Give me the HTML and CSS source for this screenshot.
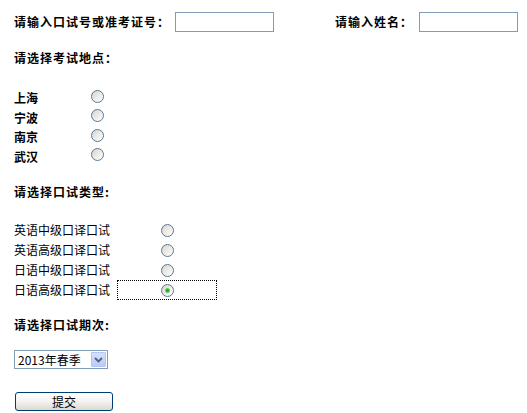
FILE: index.html
```html
<!DOCTYPE html>
<html lang="zh-CN">
<head>
    <meta charset="UTF-8">
    <title>口试报名</title>
    <link rel="stylesheet" href="styles.css">
</head>
<body>
    <form class="signup" onsubmit="return false;">
        <div class="row-top">
            <label class="lbl lbl-id" for="examNo">请输入口试号或准考证号：</label>
            <input type="text" id="examNo" class="txt">
            <label class="lbl lbl-name" for="realName">请输入姓名：</label>
            <input type="text" id="realName" class="txt">
        </div>

        <div class="section-title title-place">请选择考试地点：</div>
        <div class="choices choices-place">
            <span class="opt-bold">上海</span><span class="cell"><input type="radio" name="place"></span>
            <span class="opt-bold">宁波</span><span class="cell"><input type="radio" name="place"></span>
            <span class="opt-bold">南京</span><span class="cell"><input type="radio" name="place"></span>
            <span class="opt-bold">武汉</span><span class="cell"><input type="radio" name="place"></span>
        </div>

        <div class="section-title title-type">请选择口试类型:</div>
        <div class="choices choices-type">
            <span class="opt">英语中级口译口试</span><span class="cell"><input type="radio" name="type"></span>
            <span class="opt">英语高级口译口试</span><span class="cell"><input type="radio" name="type"></span>
            <span class="opt">日语中级口译口试</span><span class="cell"><input type="radio" name="type"></span>
            <span class="opt">日语高级口译口试</span><span class="cell focused"><input type="radio" name="type" checked></span>
        </div>

        <div class="section-title title-term">请选择口试期次:</div>
        <div class="term-wrap">
            <select class="term">
                <option>2013年春季</option>
            </select>
            <span class="term-arrow">
                <svg width="9" height="6" viewBox="0 0 9 6"><path d="M1 1 L4.5 4.5 L8 1" fill="none" stroke="#4d6185" stroke-width="1.8"/></svg>
            </span>
        </div>

        <div class="actions">
            <button type="button" class="btn-submit">提交</button>
        </div>
    </form>
</body>
</html>
```

FILE: styles.css
```css
body {
    margin: 0;
    background: #fff;
    color: #000;
    font-family: "Noto Sans CJK SC", "DejaVu Sans", sans-serif;
    font-size: 12px;
}

.signup {
    padding: 12px 0 0 14px;
}

.row-top {
    display: flex;
    align-items: center;
    height: 20px;
}

.lbl {
    font-weight: bold;
    letter-spacing: 1px;
    line-height: 20px;
}

.lbl-id {
    width: 161px;
}

.lbl-name {
    width: 84px;
    margin-left: 61px;
}

.txt {
    box-sizing: border-box;
    width: 99px;
    height: 20px;
    margin: 0;
    padding: 1px 3px;
    border: 1px solid #7f9db9;
    font-size: 12px;
    font-family: inherit;
}

.section-title {
    font-weight: bold;
    letter-spacing: 1px;
    line-height: 20px;
}

.title-place {
    margin-top: 16px;
}

.title-type {
    margin-top: 16px;
}

.title-term {
    margin-top: 15px;
}

.choices {
    display: grid;
    align-items: center;
}

.choices-place {
    margin-top: 20px;
    grid-template-columns: 77px 13px;
    grid-auto-rows: 19.5px;
}

.choices-type {
    margin-top: 18px;
    grid-template-columns: 103px 100px;
    grid-auto-rows: 20px;
}

.opt-bold {
    font-weight: bold;
    line-height: 19px;
}

.opt {
    line-height: 20px;
}

.cell {
    display: flex;
    align-items: center;
    justify-content: center;
    height: 100%;
}

.choices-place .cell {
    margin-top: -3px;
}

.focused {
    box-sizing: border-box;
    border: 1px dotted #000;
}

input[type="radio"] {
    appearance: none;
    -webkit-appearance: none;
    box-sizing: border-box;
    width: 13px;
    height: 13px;
    margin: 0;
    border: 1px solid #5a7898;
    border-radius: 50%;
    background: linear-gradient(135deg, #d4d3cc 0%, #ecebe6 50%, #ffffff 100%);
}

input[type="radio"]:checked {
    background: radial-gradient(circle, #21a421 0, #3bbf3b 1.8px, #bfe6bf 2.6px, transparent 3px),
                linear-gradient(135deg, #d4d3cc 0%, #ecebe6 50%, #ffffff 100%);
}

.term-wrap {
    position: relative;
    width: 94px;
    height: 19px;
    margin-top: 15px;
}

.term {
    appearance: none;
    -webkit-appearance: none;
    box-sizing: border-box;
    width: 94px;
    height: 19px;
    margin: 0;
    padding: 0 0 0 3px;
    border: 1px solid #7f9db9;
    background: #fff;
    font-family: inherit;
    font-size: 12px;
    color: #000;
}

.term-arrow {
    position: absolute;
    top: 2px;
    right: 2px;
    width: 15px;
    height: 15px;
    box-sizing: border-box;
    border: 1px solid #b3c6f3;
    border-radius: 1px;
    background: linear-gradient(#d4e0fd, #b9cbf7);
    display: flex;
    align-items: center;
    justify-content: center;
    pointer-events: none;
}

.actions {
    margin-top: 23px;
    padding-left: 1px;
}

.btn-submit {
    box-sizing: border-box;
    width: 98px;
    height: 19px;
    margin: 0;
    padding: 0;
    border: 1px solid #003c74;
    border-radius: 3px;
    background: linear-gradient(#ffffff 0%, #f4f3ee 50%, #dcd9cf 100%);
    font-family: inherit;
    font-size: 12px;
    line-height: 17px;
    color: #000;
}
```
